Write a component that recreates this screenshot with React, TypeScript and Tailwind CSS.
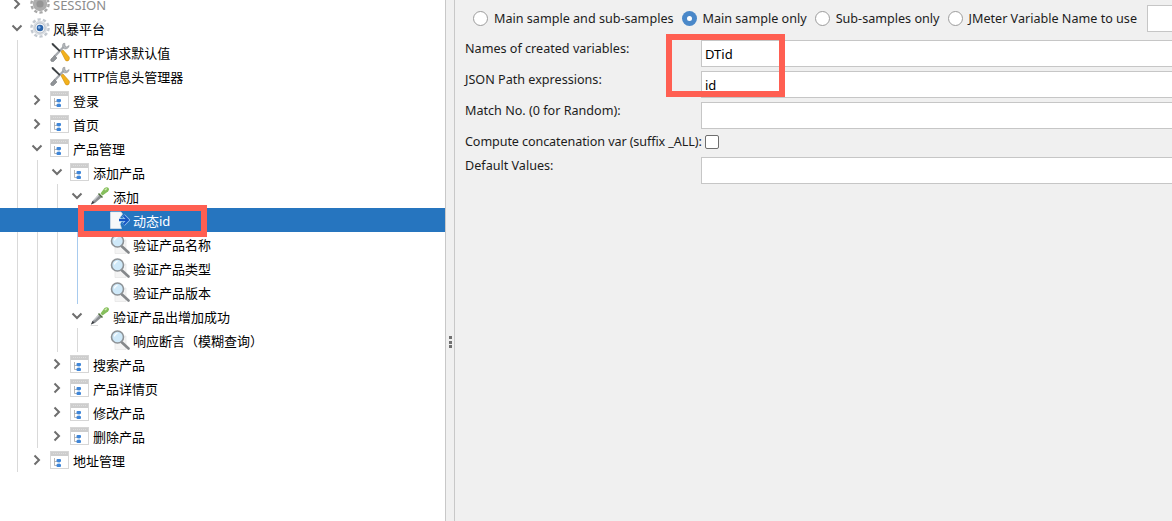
import React from "react";

const GRAY = "bg-[#d9d9d9]";
const BLUE = "bg-[#a8cbee]";

function Gear({ active }: { active?: boolean }) {
  const c = active ? "#c3c9d0" : "#a8a8a8";
  return (
    <svg width="20" height="20" viewBox="0 0 20 20" className="block">
      <circle cx="10" cy="10" r="8.6" fill="none" stroke={c} strokeWidth="2.4" strokeDasharray="3.2 2.2" />
      <circle cx="10" cy="10" r="7.2" fill={active ? "#d9dde2" : "#adadad"} />
      {active ? (
        <>
          <circle cx="10" cy="10" r="5" fill="#f7f8fa" stroke="#a3adb8" strokeWidth="0.7" />
          <circle cx="10" cy="10" r="3.3" fill="#2a64ab" />
          <circle cx="9.2" cy="9.4" r="1.3" fill="#86b2e6" />
        </>
      ) : (
        <circle cx="10" cy="10" r="3.6" fill="#959595" />
      )}
    </svg>
  );
}

function Tools() {
  return (
    <svg width="20" height="20" viewBox="0 0 20 20" className="block">
      <path d="M15 3.5 L4 15" stroke="#a7abb0" strokeWidth="2.4" />
      <path d="M13.2 1.5 a3.6 3.6 0 0 0 1.3 5.3 a3.6 3.6 0 0 0 4.6-3.3 l-2.4 1.4 l-1.8-1 l0-2.6z" fill="#b4b8bc" stroke="#85898d" strokeWidth="0.5" />
      <path d="M4.5 13.5 L1 17 a1.8 1.8 0 0 0 2.6 2.4 L7 16z" fill="#8f9397" stroke="#6d7175" strokeWidth="0.5" />
      <path d="M1.5 1.5 L3 1 L10.5 8.5 L9.3 9.7 L2 3z" fill="#3e4245" />
      <path d="M11 9.5 L13 8 L19.2 15 Q19.8 17 18.6 18.4 Q17 19.6 15.6 18.4z" fill="#f3b11c" stroke="#c98a0e" strokeWidth="0.6" />
    </svg>
  );
}

function Group() {
  return (
    <svg width="20" height="20" viewBox="0 0 20 20" className="block">
      <rect x="0.5" y="1.5" width="18" height="17" fill="#fff" stroke="#d6d6d6" />
      <rect x="1" y="2" width="17" height="4" fill="#cdcdcd" />
      <path d="M3 3.5h13" stroke="#e8e8e8" strokeWidth="0.6" strokeDasharray="1 1" />
      <path d="M4.5 8v7.5h3M4.5 11.5h3" fill="none" stroke="#a5a5a5" strokeWidth="0.8" />
      <rect x="6.5" y="9" width="4.5" height="3" rx="1" fill="#3f86d8" />
      <rect x="6.5" y="14" width="4.5" height="3" rx="1" fill="#3f86d8" />
      <rect x="7.5" y="12" width="2.5" height="2" fill="#b8d2ee" />
    </svg>
  );
}

function Pipette() {
  return (
    <svg width="20" height="20" viewBox="0 0 20 20" className="block">
      <path d="M0.5 19.5 H8" stroke="#dcdcdc" strokeWidth="1" />
      <path d="M1 18.5 L2.5 15 L9 8 L12 11 L5 17z" fill="#8b8f93" />
      <path d="M1 18.5 L2.5 15 L4.5 16.8z" fill="#3c3f42" />
      <path d="M4 14.5 L9 9.2" fill="none" stroke="#dfe2e5" strokeWidth="1" />
      <path d="M8.5 7.5 L12.5 11.5" stroke="#4f6f3a" strokeWidth="1.4" />
      <path d="M10.5 7.5 L14.5 2 Q17 0.4 18.6 2 Q19.8 3.8 18 5.6 L12.5 9.5z" fill="#86bf5c" />
      <path d="M14.8 4 L16.8 2.4" stroke="#d3ecb8" strokeWidth="1.3" />
    </svg>
  );
}

function Extractor() {
  return (
    <svg width="20" height="20" viewBox="0 0 20 20" className="block">
      <path d="M0.5 2 H11 L12.5 4 L10 7.5 L12 10.5 L10 14 L11.5 18.5 H0.5z" fill="#f7f8f9" stroke="#dfe4e9" strokeWidth="0.7" />
      <path d="M9 10 H17 M13.5 5.5 L18 10 L13.5 14.5" fill="none" stroke="#9cc7f0" strokeWidth="3.4" />
      <path d="M9 10 H17 M13.5 5.5 L18 10 L13.5 14.5" fill="none" stroke="#1656c4" strokeWidth="2" />
    </svg>
  );
}

function Lens() {
  return (
    <svg width="20" height="20" viewBox="0 0 20 20" className="block">
      <path d="M5 6 H16 V19.5 H5z" fill="#f4f4f4" stroke="#e4e4e4" strokeWidth="0.7" />
      <path d="M12 12.5 L18.5 18.5" stroke="#85888b" strokeWidth="2.6" strokeLinecap="round" />
      <circle cx="7.5" cy="7" r="6" fill="#cfe9f9" stroke="#8d9296" strokeWidth="1.6" />
      <path d="M4.5 6.5 a3.4 3.4 0 0 1 3-3" fill="none" stroke="#fff" strokeWidth="1.2" />
    </svg>
  );
}

function Chevron({ open }: { open: boolean }) {
  return (
    <svg width="12" height="12" viewBox="0 0 12 12" className="block">
      <path d={open ? "M1.5 3.5 L6 8 L10.5 3.5" : "M3.5 1.5 L8 6 L3.5 10.5"} fill="none" stroke="#6e6e6e" strokeWidth="2" />
    </svg>
  );
}

type Kind = "gearOff" | "gear" | "tools" | "group" | "pipette" | "extract" | "lens";
type Row = { label: string; depth: number; icon: Kind; arrow?: "open" | "closed"; guides: string[]; selected?: boolean; disabled?: boolean };

const icons: Record<Kind, React.ReactNode> = {
  gearOff: <Gear />,
  gear: <Gear active />,
  tools: <Tools />,
  group: <Group />,
  pipette: <Pipette />,
  extract: <Extractor />,
  lens: <Lens />,
};

const rows: Row[] = [
  { label: "SESSION", depth: 0, icon: "gearOff", arrow: "closed", guides: [], disabled: true },
  { label: "风暴平台", depth: 0, icon: "gear", arrow: "open", guides: [] },
  { label: "HTTP请求默认值", depth: 1, icon: "tools", guides: [GRAY] },
  { label: "HTTP信息头管理器", depth: 1, icon: "tools", guides: [GRAY] },
  { label: "登录", depth: 1, icon: "group", arrow: "closed", guides: [GRAY] },
  { label: "首页", depth: 1, icon: "group", arrow: "closed", guides: [GRAY] },
  { label: "产品管理", depth: 1, icon: "group", arrow: "open", guides: [GRAY] },
  { label: "添加产品", depth: 2, icon: "group", arrow: "open", guides: [GRAY, GRAY] },
  { label: "添加", depth: 3, icon: "pipette", arrow: "open", guides: [GRAY, GRAY, GRAY] },
  { label: "动态id", depth: 4, icon: "extract", guides: ["", "", "", ""], selected: true },
  { label: "验证产品名称", depth: 4, icon: "lens", guides: [GRAY, GRAY, GRAY, BLUE] },
  { label: "验证产品类型", depth: 4, icon: "lens", guides: [GRAY, GRAY, GRAY, BLUE] },
  { label: "验证产品版本", depth: 4, icon: "lens", guides: [GRAY, GRAY, GRAY, BLUE] },
  { label: "验证产品出增加成功", depth: 3, icon: "pipette", arrow: "open", guides: [GRAY, GRAY, GRAY] },
  { label: "响应断言（模糊查询）", depth: 4, icon: "lens", guides: [GRAY, GRAY, GRAY, GRAY] },
  { label: "搜索产品", depth: 2, icon: "group", arrow: "closed", guides: [GRAY, GRAY] },
  { label: "产品详情页", depth: 2, icon: "group", arrow: "closed", guides: [GRAY, GRAY] },
  { label: "修改产品", depth: 2, icon: "group", arrow: "closed", guides: [GRAY, GRAY] },
  { label: "删除产品", depth: 2, icon: "group", arrow: "closed", guides: [GRAY, GRAY] },
  { label: "地址管理", depth: 1, icon: "group", arrow: "closed", guides: [GRAY] },
];

function TreeRow({ row }: { row: Row }) {
  const bg = row.selected ? "bg-[#2675bf] text-white" : row.disabled ? "text-[#8c8c8c]" : "text-black";
  return (
    <div className={`flex h-6 items-stretch pl-[7px] ${bg}`}>
      {row.guides.map((g, i) => (
        <div key={i} className="flex w-5 shrink-0 justify-center">
          <div className={`h-full w-px ${g}`} />
        </div>
      ))}
      <div className="flex w-5 shrink-0 items-center justify-center">
        {row.arrow && <Chevron open={row.arrow === "open"} />}
      </div>
      <div className="ml-[3px] flex w-5 shrink-0 items-center">{icons[row.icon]}</div>
      <span className="ml-[3px] self-center pt-[1px] leading-[20px] whitespace-nowrap">{row.label}</span>
    </div>
  );
}

function Radio({ label, checked }: { label: string; checked?: boolean }) {
  return (
    <div className="flex items-center gap-[6px] whitespace-nowrap">
      {checked ? (
        <span className="flex h-[15px] w-[15px] items-center justify-center rounded-full bg-[#4a88c9]">
          <span className="h-[5px] w-[5px] rounded-full bg-white" />
        </span>
      ) : (
        <span className="h-[15px] w-[15px] rounded-full border border-[#9c9c9c] bg-white" />
      )}
      <span>{label}</span>
    </div>
  );
}

function Field({ label, value }: { label: string; value?: string }) {
  return (
    <div className="flex items-start">
      <div className="w-[236px] shrink-0 leading-[18px] whitespace-nowrap">{label}</div>
      <input
        readOnly
        value={value ?? ""}
        className="h-[27px] min-w-0 flex-1 border border-r-0 border-[#c6c6c6] bg-white px-[3px] text-[13px] text-black outline-none"
      />
    </div>
  );
}

export default function App() {
  return (
    <div className="relative flex h-screen w-screen overflow-hidden bg-[#f0f0f0] text-[13px] font-['Noto_Sans','Noto_Sans_CJK_SC',sans-serif] text-[#1c1c1c]">
      <div className="w-[445px] shrink-0 overflow-hidden bg-white">
        <div className="-mt-2">
          {rows.map((r) => (
            <TreeRow key={r.label} row={r} />
          ))}
        </div>
      </div>
      <div className="w-[10px] shrink-0 border-x border-[#c8c8c8] pt-[336px]">
        <div className="flex flex-col items-center gap-[1.5px]">
          <span className="h-[3px] w-[3px] bg-[#707070]" />
          <span className="h-[3px] w-[3px] bg-[#707070]" />
          <span className="h-[3px] w-[3px] bg-[#707070]" />
        </div>
      </div>
      <div className="min-w-0 flex-1 pl-[10px] text-[12.6px]">
        <div className="flex h-[38px] items-center pl-[8px]">
          <div className="mr-[8px]"><Radio label="Main sample and sub-samples" /></div>
          <div className="mr-[8px]"><Radio label="Main sample only" checked /></div>
          <div className="mr-[8px]"><Radio label="Sub-samples only" /></div>
          <Radio label="JMeter Variable Name to use" />
          <div className="ml-[10px] -mt-[1px] h-[27px] w-[40px] shrink-0 border border-r-0 border-[#c6c6c6] bg-white" />
        </div>
        <div className="mt-[2px] flex flex-col gap-[4px]">
          <Field label="Names of created variables:" value="DTid" />
          <Field label="JSON Path expressions:" value="id" />
          <Field label="Match No. (0 for Random):" />
          <div className="flex h-5 items-center">
            <div className="w-[240px] shrink-0 pb-[2px] leading-[16px] tracking-[-0.1px] whitespace-nowrap">Compute concatenation var (suffix _ALL):</div>
            <span className="-mt-[2px] h-[14px] w-[14px] rounded-[2px] border border-[#6e6e6e] bg-white" />
          </div>
          <Field label="Default Values:" />
        </div>
      </div>
      <div className="absolute left-[78px] top-[205px] h-[32px] w-[129px] border-[6px] border-[#ff5f52]" />
      <div className="absolute left-[666px] top-[34px] h-[63px] w-[119px] border-[6px] border-[#ff5f52]" />
    </div>
  );
}
